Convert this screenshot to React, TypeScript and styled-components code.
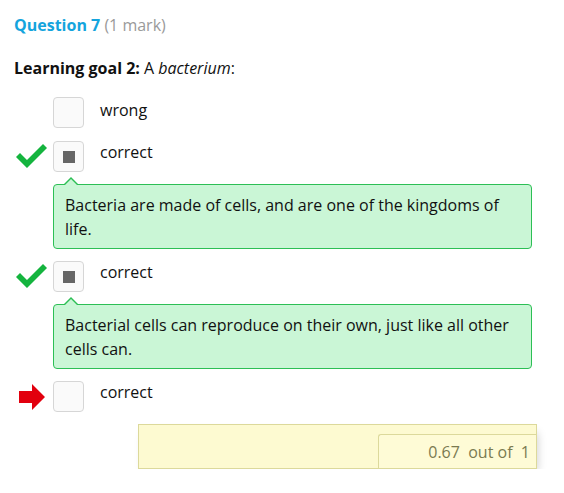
import React from "react";
import styled, { createGlobalStyle } from "styled-components";

const Global = createGlobalStyle`
  html, body { margin: 0; padding: 0; background: #fff; }
  body { font-family: "Open Sans", "Noto Sans", sans-serif; font-size: 16px; color: #111; }
`;

const Page = styled.div`
  padding: 13px 0 0 14px;
  width: 564px;
  box-sizing: border-box;
`;

const Title = styled.div`
  line-height: 24px;
  font-size: 16px;
`;

const QNum = styled.span`
  color: #14a4dd;
  font-weight: 700;
`;

const Mark = styled.span`
  color: #9a9a9a;
`;

const Prompt = styled.div`
  margin-top: 19px;
  line-height: 24px;
`;

const List = styled.div`
  margin-top: 17px;
  display: flex;
  flex-direction: column;
  gap: 12px;
`;

const Row = styled.div<{ $first?: boolean }>`
  display: flex;
  align-items: center;
  margin-bottom: ${(p) => (p.$first ? "1px" : "0")};
`;

const Marker = styled.div`
  width: 39px;
  height: 31px;
  display: flex;
  align-items: center;
  justify-content: flex-end;
`;

const Box = styled.div`
  width: 31px;
  height: 31px;
  box-sizing: border-box;
  border: 1px solid #d6d6d6;
  border-radius: 4px;
  background: #fafafa;
  display: flex;
  align-items: center;
  justify-content: center;
`;

const Fill = styled.div`
  width: 12px;
  height: 12px;
  background: #666;
`;

const Label = styled.div<{ $shift?: number }>`
  margin-left: 16px;
  line-height: 24px;
  align-self: flex-start;
  margin-top: ${(p) => p.$shift ?? -1}px;
`;

const Feedback = styled.div`
  position: relative;
  margin-left: 39px;
  width: 479px;
  box-sizing: border-box;
  background: #caf6d6;
  border: 1px solid #2cbf55;
  border-radius: 4px;
  padding: 8px 11px 7px 11px;
  line-height: 24px;
  &::before {
    content: "";
    position: absolute;
    left: 9px;
    top: -8px;
    border-left: 8px solid transparent;
    border-right: 8px solid transparent;
    border-bottom: 8px solid #2cbf55;
  }
  &::after {
    content: "";
    position: absolute;
    left: 10px;
    top: -6px;
    border-left: 7px solid transparent;
    border-right: 7px solid transparent;
    border-bottom: 7px solid #caf6d6;
  }
`;

const Outcome = styled.div`
  margin-left: 124px;
  width: 399px;
  height: 45px;
  box-sizing: border-box;
  background: #fdfad1;
  border: 1px solid #dcd99b;
  display: flex;
  justify-content: flex-end;
  align-items: flex-end;
  box-shadow: 3px 6px 9px -3px rgba(0, 0, 0, 0.22);
`;

const Score = styled.div`
  width: 158px;
  height: 34px;
  box-sizing: border-box;
  border-top: 1px solid #dcd99b;
  border-left: 1px solid #dcd99b;
  border-top-left-radius: 3px;
  background: #fefbd6;
  color: #7a7a50;
  display: flex;
  align-items: center;
  justify-content: flex-end;
  padding-right: 6px;
  white-space: pre;
`;

const Check = () => (
  <svg width="32" height="25" viewBox="0 0 32 25" style={{ marginRight: 5 }}>
    <polygon points="0,13 4,9 11,16 27,0 31,4 11,24" fill="#14b43e" />
  </svg>
);

const RedArrow = () => (
  <svg width="26" height="26" viewBox="0 0 26 26" style={{ marginRight: 8 }}>
    <polygon points="0,7 13,7 13,0 26,13 13,26 13,19 0,19" fill="#e2000e" />
  </svg>
);

export default function App() {
  return (
    <>
      <Global />
      <Page>
        <Title>
          <QNum>Question 7</QNum> <Mark>(1 mark)</Mark>
        </Title>
        <Prompt>
          <b>Learning goal 2:</b> A <i>bacterium</i>:
        </Prompt>
        <List>
          <Row $first>
            <Marker />
            <Box />
            <Label $shift={1}>wrong</Label>
          </Row>
          <Row>
            <Marker>
              <Check />
            </Marker>
            <Box>
              <Fill />
            </Box>
            <Label>correct</Label>
          </Row>
          <Feedback>
            Bacteria are made of cells, and are one of the kingdoms of life.
          </Feedback>
          <Row>
            <Marker>
              <Check />
            </Marker>
            <Box>
              <Fill />
            </Box>
            <Label>correct</Label>
          </Row>
          <Feedback>
            Bacterial cells can reproduce on their own, just like all other cells can.
          </Feedback>
          <Row>
            <Marker>
              <RedArrow />
            </Marker>
            <Box />
            <Label>correct</Label>
          </Row>
          <Outcome>
            <Score>0.67  out of  1</Score>
          </Outcome>
        </List>
      </Page>
    </>
  );
}
